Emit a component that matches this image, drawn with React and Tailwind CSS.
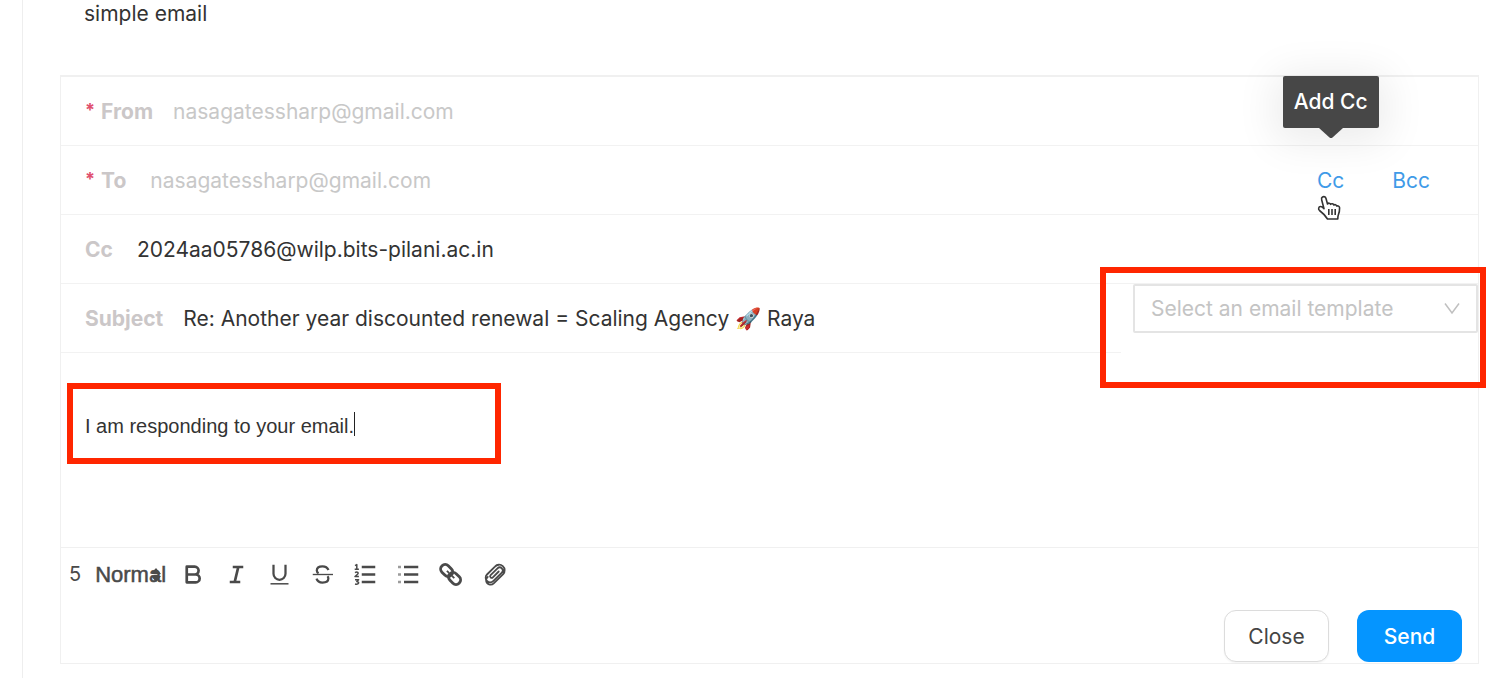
import { useState } from 'react';

const linkClass = 'text-[#3f9be8] hover:underline';

function FieldRow({ id, label, required, gap = 'gap-5', children }) {
  return (
    <div className={`flex h-[69px] items-center border-b border-[#f2f2f2] pl-6 ${gap}`}>
      <label htmlFor={id} className="flex shrink-0 gap-1.5 font-bold text-[#cbc7c8]">
        {required && <span className="text-lg leading-6 text-[#e0506e]">*</span>}
        {label}
      </label>
      {children}
    </div>
  );
}

function ToolButton({ label, children }) {
  return (
    <button type="button" aria-label={label} className="text-[#4a4a4a]">
      <svg
        className="size-[27px]"
        viewBox="0 0 18 18"
        fill="none"
        stroke="currentColor"
        strokeWidth="1.8"
        strokeLinejoin="round"
      >
        {children}
      </svg>
    </button>
  );
}

function Toolbar() {
  return (
    <div className="flex items-center gap-4 pt-3 pl-2">
      <div className="flex w-[95px] items-center gap-3.5 text-[#4a4a4a]">
        <span className="text-xl">5</span>
        <label htmlFor="heading" className="relative">
          <select
            id="heading"
            aria-label="Text style"
            className="block appearance-none bg-transparent font-['Liberation_Sans',sans-serif] text-[22px] outline-none [-webkit-text-stroke:0.5px_#4a4a4a]"
          >
            <option>Normal</option>
          </select>
          <svg className="pointer-events-none absolute top-1.5 right-1 h-4 w-3" viewBox="0 0 12 16" fill="currentColor">
            <path d="M6 1 11 7H1ZM1 9h10l-5 6Z" />
          </svg>
        </label>
      </div>
      <ToolButton label="Bold">
        <path d="M4.500 3.800H9.800a2.500 2.500 0 0 1 0 5.200H4.500ZM4.500 9h6a2.600 2.600 0 0 1 0 5.200h-6Z" />
      </ToolButton>
      <ToolButton label="Italic">
        <path d="M6.500 4h7M4.500 14h7M10.200 4 7.800 14" />
      </ToolButton>
      <ToolButton label="Underline">
        <path d="M5 2.500v6a4 4 0 0 0 8 0v-6" strokeWidth="1.500" />
        <path d="M3 15.200h12" strokeWidth="1" />
      </ToolButton>
      <ToolButton label="Strike">
        <path
          d="M13 6C12.200 4.200 10.600 3.600 9 3.600 7 3.600 5.200 4.500 5.200 6.300c0 .8.4 1.400 1.200 1.800M5 11.800c.6 1.800 2.200 2.600 4 2.600 2.200 0 3.900-1 3.900-2.700 0-.7-.2-1.100-.6-1.500"
          strokeWidth="1.500"
        />
        <path d="M2.500 9h13.500" strokeWidth=".9" />
      </ToolButton>
      <ToolButton label="Ordered list">
        <path d="M6.500 4h9M6.500 9h9M6.500 14h9" />
        <path
          d="M2 3.100 3.200 2.400V5.500M1.800 5.500h2.800M2 7.800c1.500-1 2.900.1 1.500 1.200L2 10.300h2.600M2 12.500h2.400L3.200 13.700c1.900.1 1.600 2.200-1.200 1.600"
          strokeWidth="1"
        />
      </ToolButton>
      <ToolButton label="Bullet list">
        <path d="M6 4h9.500M6 9h9.500M6 14h9.500" />
        <path d="M2 4h2M2 9h2M2 14h2" opacity=".55" />
      </ToolButton>
      <ToolButton label="Link">
        <g transform="translate(-0.6 0) rotate(45 9 9)" strokeWidth="1.900">
          <rect x="0.900" y="6" width="8.800" height="6" rx="2.900" />
          <rect x="8.300" y="6" width="8.800" height="6" rx="2.900" />
          <path d="M5.500 9h2M10.500 9h2" strokeWidth="1.200" />
        </g>
      </ToolButton>
      <ToolButton label="Attach file">
        <path
          d="M11.800 7 7.900 10.900a1 1 0 0 1-1.500-1.500l4.600-4.500a2 2 0 0 1 2.900 2.900L8.300 13.300a3 3 0 0 1-4.300-4.300L9.300 3.700a3.700 3.700 0 0 1 5.500 5L8.500 14.900a3 3 0 0 1-5.100-1.800c-.1-1 .4-1.800 1.100-2.500"
          strokeWidth="1.200"
          strokeLinecap="round"
        />
      </ToolButton>
    </div>
  );
}

function HandPointer() {
  return (
    <svg
      className="pointer-events-none absolute top-7 left-0 h-7 w-6"
      viewBox="0 0 24 28"
      fill="#fff"
      stroke="#333"
      strokeWidth="1.600"
      strokeLinejoin="round"
    >
      <path d="M5.500 2C7 1 8.500 2 9 3.500L10.500 9c.8-1.300 2.600-1 3.100.3.900-1 2.700-.7 3.200.7 1-.7 2.500-.3 2.900 1 1.200-.5 2.800.2 2.900 1.800.1 2.600-.3 4.800-1.300 7.200-.4 1-.5 2-.5 4H10.500c-1.500-2.500-4-5.500-8-8.500-1.500-1.200-1-4 1-4 1.300 0 2.500 1 3.500 2.200L4.700 5C4.300 3.700 4.500 2.600 5.500 2Z" />
      <path d="M11.800 14v6M15 14v6M18.200 14v6" />
    </svg>
  );
}

function Composer() {
  const [subject, setSubject] = useState('Re: Another year discounted renewal = Scaling Agency 🚀 Raya');
  const [body, setBody] = useState('I am responding to your email.');

  return (
    <form className="mt-12 border border-t-2 border-[#f0f0f0]" onSubmit={(e) => e.preventDefault()}>
      <FieldRow id="from" label="From" required>
        <input id="from" placeholder="nasagatessharp@gmail.com" className="min-w-0 flex-1 outline-none placeholder:text-[#c8c8c8]" />
      </FieldRow>
      <FieldRow id="to" label="To" required gap="gap-6">
        <input id="to" placeholder="nasagatessharp@gmail.com" className="min-w-0 flex-1 outline-none placeholder:text-[#c8c8c8]" />
        <div className="flex gap-12 pr-12">
          <span className="relative">
            <a href="#cc" className={linkClass}>Cc</a>
            <span
              role="tooltip"
              className="absolute bottom-[66px] left-1/2 flex h-13 w-24 -translate-x-1/2 items-center justify-center rounded-xs bg-[#474747] font-medium whitespace-nowrap text-white shadow-[0_6px_40px_8px_rgba(0,0,0,0.08)]"
            >
              Add Cc
              <svg className="absolute top-full h-[10px] w-6" viewBox="0 0 24 10" fill="#474747">
                <path d="M0 0h24L13.500 9.500q-1.500 1-3 0Z" />
              </svg>
            </span>
            <HandPointer />
          </span>
          <a href="#bcc" className={linkClass}>Bcc</a>
        </div>
      </FieldRow>
      <FieldRow id="cc" label="Cc" gap="gap-6">
        <input id="cc" defaultValue="2024aa05786@wilp.bits-pilani.ac.in" className="min-w-0 flex-1 outline-none" />
      </FieldRow>

      <div className="flex items-start">
        <div className="min-w-0 flex-1">
          <FieldRow id="subject" label="Subject">
            <input
              id="subject"
              value={subject}
              onChange={(e) => setSubject(e.target.value)}
              className="min-w-0 flex-1 outline-none"
            />
          </FieldRow>
        </div>
        <div className="relative ml-3 w-[345px]">
          <select
            aria-label="Email template"
            className="h-[49px] w-full appearance-none rounded-xs border-2 border-[#e4e4e4] bg-white px-4 text-[#c4c4c4] outline-none"
          >
            <option>Select an email template</option>
          </select>
          <svg className="pointer-events-none absolute top-[17px] right-[18px] size-4" viewBox="0 0 16 16" fill="none" stroke="#c0c0c0" strokeWidth="1.500">
            <path d="M1 2.500 8 12l7-9.500" />
          </svg>
          <div className="pointer-events-none absolute -top-[17px] -right-2 h-[121px] w-[386px] border-6 border-[#ff2600]" />
        </div>
      </div>

      <div className="relative flex h-[195px] items-start border-b border-[#f0f0f0] pt-[59px] pl-6 font-['Liberation_Sans',sans-serif] text-xl">
        <textarea
          aria-label="Message"
          rows={1}
          value={body}
          onChange={(e) => setBody(e.target.value)}
          className="field-sizing-content resize-none overflow-hidden outline-none"
        />
        <span className="h-6 w-px bg-[#222]" />
        <div className="pointer-events-none absolute top-[30px] left-[6px] h-[81px] w-[434px] border-6 border-[#ff2600]" />
      </div>

      <Toolbar />

      <div className="flex justify-end gap-7 pt-[22px] pr-4 pb-px">
        <button type="button" className="h-13 w-[105px] rounded-xl border border-[#dcdcdc] bg-white text-[#444] shadow-xs">
          Close
        </button>
        <button type="submit" className="h-13 w-[105px] rounded-xl bg-[#0595ff] font-medium text-white">
          Send
        </button>
      </div>
    </form>
  );
}

export default function App() {
  return (
    <div className="flex min-h-screen overflow-hidden bg-white pl-[22px] font-['Inter',sans-serif] text-[21px] leading-[27px] text-[#333]">
      <main className="min-w-0 flex-1 border-l border-[#eeeeee] pr-[25px] pl-[37px]">
        <p className="pl-6">simple email</p>
        <Composer />
      </main>
    </div>
  );
}
